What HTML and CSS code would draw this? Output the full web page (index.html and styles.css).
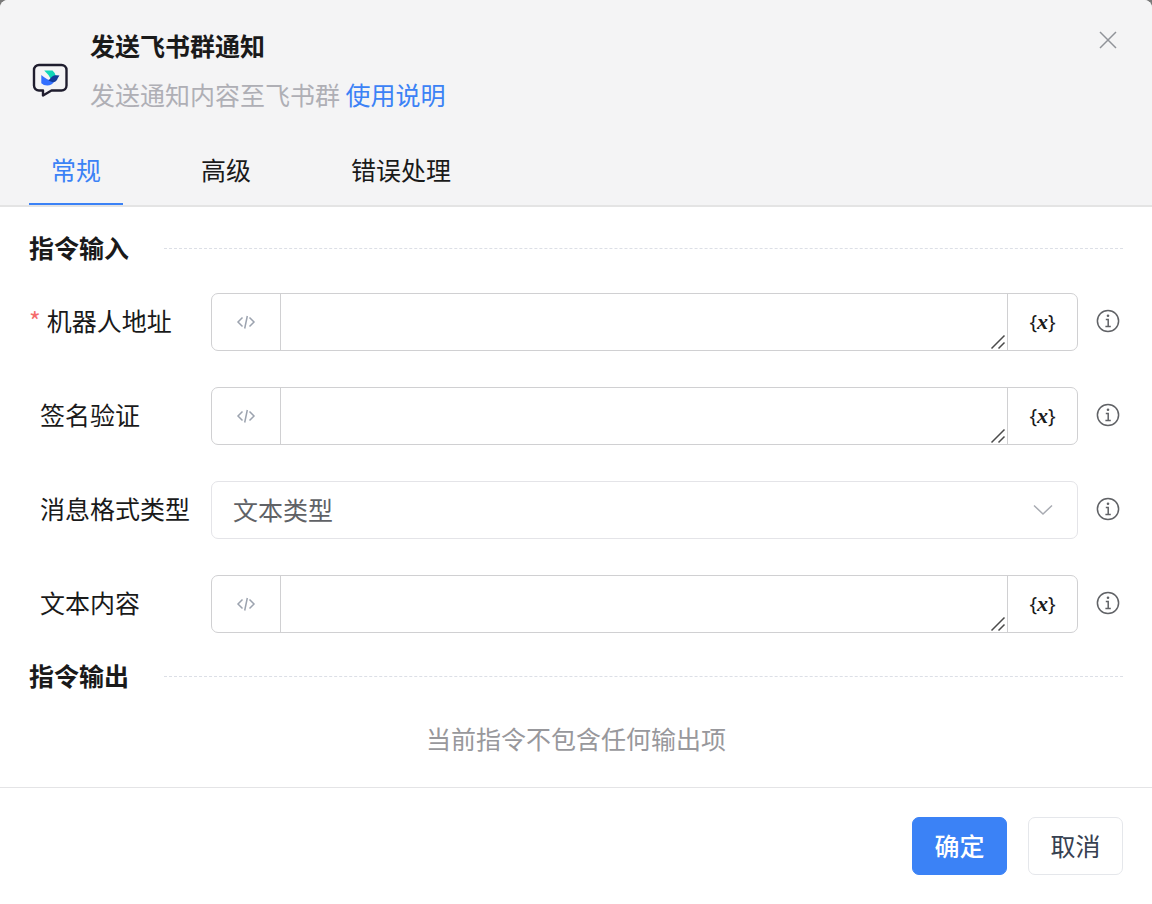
FILE: index.html
```html
<!DOCTYPE html>
<html lang="zh-CN">
<head>
<meta charset="utf-8">
<meta name="viewport" content="width=device-width, initial-scale=1">
<title>发送飞书群通知</title>
<link rel="stylesheet" href="styles.css">
</head>
<body>
<svg class="sprite" aria-hidden="true">
  <symbol id="code" viewBox="0 0 20 16"><path d="M6.500 3.500 2 8l4.500 4.500M13.500 3.500 18 8l-4.500 4.500M11.300 2 8.700 14.500" fill="none" stroke="currentColor" stroke-width="1.500"/></symbol>
  <symbol id="grip" viewBox="0 0 16 16"><path d="M1.500 14.500 14.500 1.500M8.500 14.500l6-6" fill="none" stroke="currentColor" stroke-width="1.500"/></symbol>
  <symbol id="info" viewBox="0 0 24 24"><circle cx="12" cy="12" r="10.600" fill="none" stroke="currentColor" stroke-width="1.500"/><circle cx="12" cy="6.700" r="1.300" fill="currentColor"/><path d="M9.800 10.400h2.400v7M9.400 17.500h5.400" fill="none" stroke="currentColor" stroke-width="1.500"/></symbol>
</svg>
<main class="dialog" role="dialog" aria-labelledby="dialog-title">
  <header class="header">
    <div class="heading">
      <svg class="logo" viewBox="0 0 38 36" aria-hidden="true">
        <path d="M7 2h22.500a5 5 0 0 1 5 5v15.500a5 5 0 0 1-5 5H19.500l-8.500 5v-5H7a5 5 0 0 1-5-5V7a5 5 0 0 1 5-5Z" fill="none" stroke="#1f1d2e" stroke-width="2.400" stroke-linejoin="round"/>
        <path d="M12.200 7.500h8.300q2.500 2 3.300 5.500l-4.600 3.800q-2.500-5.500-7-9.300Z" fill="#0ed6b8"/>
        <path d="M9.300 12q5.500 5 13 6.500-2.500 4-7 4-3.800 0-6-2.200Z" fill="#3370ff"/>
        <path d="M16.500 17.500q3.500-4.800 6.500-5.300 2.500-.2 4.500.3-1.500 2-2.500 4.400-1.700 2.300-4 2.300-2.300-.4-4.500-1.700Z" fill="#133c9a"/>
      </svg>
      <div class="heading-text">
        <h1 class="title" id="dialog-title">发送飞书群通知</h1>
        <p class="description">发送通知内容至飞书群 <a class="link" href="#">使用说明</a></p>
      </div>
      <button class="close" type="button" aria-label="关闭"><svg viewBox="0 0 20 20" width="20" height="20"><path d="m2 2 16 16M18 2 2 18" stroke="currentColor" stroke-width="1.500"/></svg></button>
    </div>
    <div class="tabs" role="tablist">
      <button class="tab tab-active" type="button" role="tab" aria-selected="true">常规</button>
      <button class="tab" type="button" role="tab" aria-selected="false">高级</button>
      <button class="tab" type="button" role="tab" aria-selected="false">错误处理</button>
    </div>
  </header>

  <form class="content">
    <h2 class="section">指令输入</h2>
    <div class="rows">
      <div class="row">
        <label class="label required" for="robot">机器人地址</label>
        <div class="field">
          <button class="addon" type="button" aria-label="代码"><svg class="code"><use href="#code"/></svg></button>
          <div class="area"><textarea class="input" id="robot" rows="1"></textarea><svg class="grip"><use href="#grip"/></svg></div>
          <button class="addon variable" type="button">{<i class="symbol">x</i>}</button>
        </div>
        <button class="info" type="button" aria-label="说明"><svg class="info-icon"><use href="#info"/></svg></button>
      </div>
      <div class="row">
        <label class="label" for="sign">签名验证</label>
        <div class="field">
          <button class="addon" type="button" aria-label="代码"><svg class="code"><use href="#code"/></svg></button>
          <div class="area"><textarea class="input" id="sign" rows="1"></textarea><svg class="grip"><use href="#grip"/></svg></div>
          <button class="addon variable" type="button">{<i class="symbol">x</i>}</button>
        </div>
        <button class="info" type="button" aria-label="说明"><svg class="info-icon"><use href="#info"/></svg></button>
      </div>
      <div class="row">
        <label class="label" for="format">消息格式类型</label>
        <div class="field field-select">
          <select class="select" id="format"><option>文本类型</option></select>
          <svg class="chevron" viewBox="0 0 20 12"><path d="m1 1.500 9 8.500 9-8.500" fill="none" stroke="currentColor" stroke-width="1.500"/></svg>
        </div>
        <button class="info" type="button" aria-label="说明"><svg class="info-icon"><use href="#info"/></svg></button>
      </div>
      <div class="row">
        <label class="label" for="text">文本内容</label>
        <div class="field">
          <button class="addon" type="button" aria-label="代码"><svg class="code"><use href="#code"/></svg></button>
          <div class="area"><textarea class="input" id="text" rows="1"></textarea><svg class="grip"><use href="#grip"/></svg></div>
          <button class="addon variable" type="button">{<i class="symbol">x</i>}</button>
        </div>
        <button class="info" type="button" aria-label="说明"><svg class="info-icon"><use href="#info"/></svg></button>
      </div>
    </div>
    <h2 class="section">指令输出</h2>
    <p class="empty">当前指令不包含任何输出项</p>
  </form>

  <footer class="footer">
    <button class="button primary" type="button">确定</button>
    <button class="button" type="button">取消</button>
  </footer>
</main>
</body>
</html>
```
FILE: styles.css
```css
* {
  box-sizing: border-box;
}

body {
  margin: 0;
  background: #7a7a7a;
  color: #1a1a1a;
  font: 25px/36px "Noto Sans CJK SC", sans-serif;
}

button,
select,
textarea {
  margin: 0;
  padding: 0;
  border: 0;
  background: none;
  color: inherit;
  font: inherit;
}

button {
  cursor: pointer;
}

svg {
  display: block;
}

h1,
h2,
p {
  margin: 0;
}

.sprite {
  position: absolute;
  width: 0;
  height: 0;
}

.dialog {
  display: flex;
  flex-direction: column;
  min-height: 100vh;
  overflow: hidden;
  border-radius: 8px 8px 0 0;
  background: #fff;
}

.header {
  padding: 27px 29px 0;
  border-bottom: 2px solid #e4e4e4;
  background: #f4f4f5;
}

.heading {
  display: flex;
  align-items: flex-start;
}

.logo {
  width: 38px;
  height: 36px;
  margin: 36px 20px 0 3px;
}

.heading-text {
  flex: 1;
}

.title {
  font-size: 25px;
  font-weight: 700;
}

.description {
  margin-top: 13px;
  color: #afafb5;
}

.link {
  color: #3b82f6;
  text-decoration: none;
}

.close {
  padding: 3px 5px 0;
  line-height: 0;
  color: #909399;
}

.tabs {
  display: flex;
  gap: 56px;
  margin-top: 24px;
}

.tab {
  padding: 16px 22px 17px;
  line-height: 34px;
  border-bottom: 2px solid transparent;
}

.tab-active {
  border-color: #3b82f6;
  color: #3b82f6;
}

.content {
  flex: 1;
  padding: 22px 29px 29px;
}

.section {
  display: flex;
  align-items: center;
  gap: 35px;
  font-size: 25px;
  font-weight: 700;
}

.section::after {
  flex: 1;
  margin-top: 2px;
  border-top: 1px dashed #dcdfe6;
  content: "";
}

.rows {
  display: grid;
  gap: 36px;
  margin: 28px 0 24px;
}

.row {
  display: grid;
  grid-template-columns: 182px 1fr 45px;
  align-items: center;
}

.label {
  padding: 0 0 4px 11px;
  white-space: nowrap;
}

.required {
  padding-left: 0;
}

.required::before {
  margin-right: 6px;
  color: #f56c6c;
  content: "*";
}

.field {
  display: flex;
  height: 58px;
  border: 1px solid #d0d0d2;
  border-radius: 7px;
}

.field-select {
  position: relative;
  border-color: #e4e4e8;
}

.addon {
  display: grid;
  place-items: center;
  width: 68px;
  color: #9ca3af;
}

.variable {
  display: block;
  width: 69px;
  color: #1a1a1a;
  font: 20px/52px "Noto Sans", sans-serif;
}

.symbol {
  font: italic 700 22px/1 "Liberation Serif", serif;
}

.code {
  width: 20px;
  height: 16px;
}

.area {
  position: relative;
  flex: 1;
  border: solid #d0d0d2;
  border-width: 0 1px;
}

.input {
  display: block;
  width: 100%;
  height: 100%;
  padding: 10px 22px;
  resize: none;
  outline: none;
}

.grip {
  position: absolute;
  right: 1px;
  bottom: 0;
  width: 16px;
  height: 16px;
  color: #4b4b4b;
  pointer-events: none;
}

.select {
  width: 100%;
  padding: 0 21px 2px;
  appearance: none;
  color: #606266;
  outline: none;
}

.chevron {
  position: absolute;
  top: 22px;
  right: 24px;
  width: 20px;
  height: 12px;
  color: #a8abb2;
  pointer-events: none;
}

.info {
  justify-self: end;
  margin-right: 3px;
  padding-bottom: 2px;
  color: #606266;
}

.info-icon {
  width: 24px;
  height: 24px;
}

.empty {
  margin-top: 27px;
  color: #98989c;
  text-align: center;
}

.footer {
  display: flex;
  justify-content: flex-end;
  gap: 21px;
  padding: 29px;
  border-top: 1px solid #e4e4e6;
}

.button {
  min-width: 95px;
  height: 58px;
  padding: 0 20px 2px;
  border: 1px solid #e5e7eb;
  border-radius: 7px;
  color: #374151;
}

.primary {
  border-color: #3b82f6;
  background: #3b82f6;
  color: #fff;
  font-weight: 500;
}
```
